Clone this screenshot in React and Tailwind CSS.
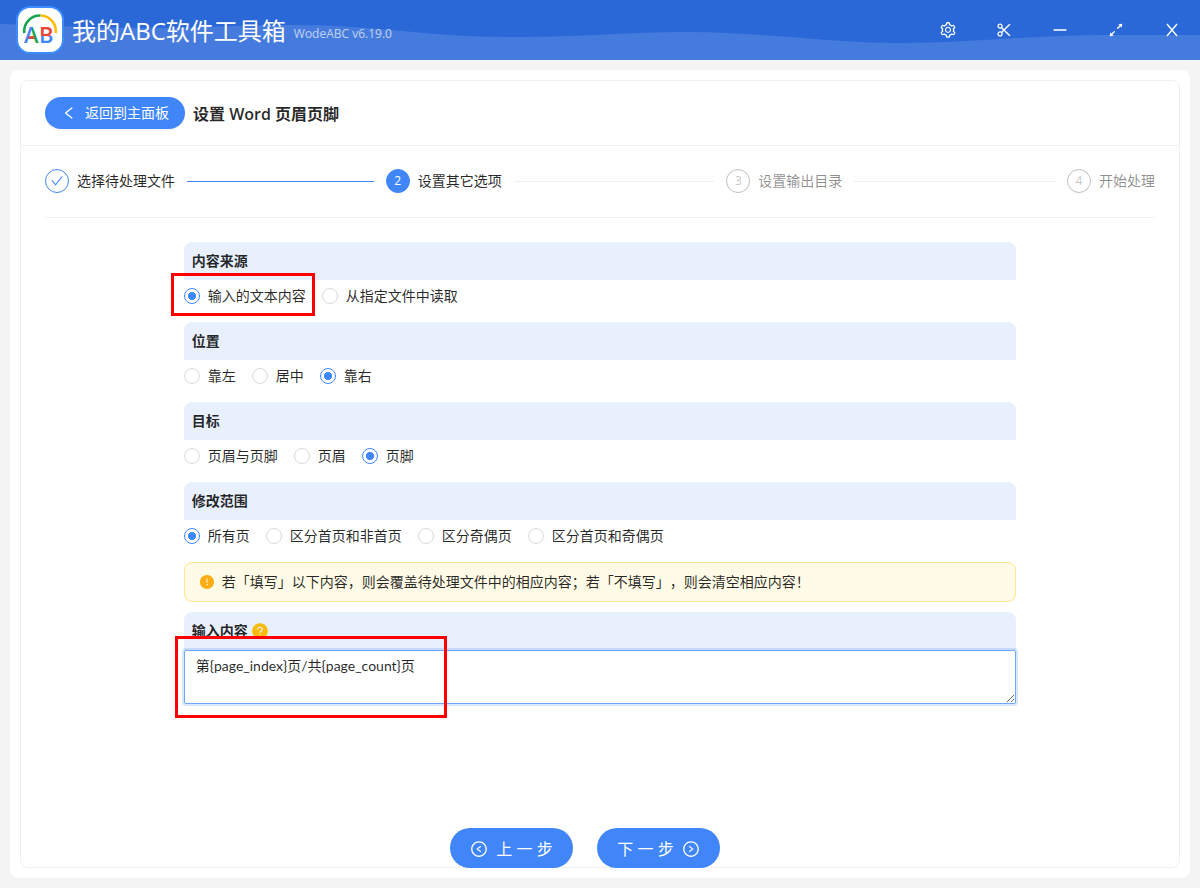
import { useState } from 'react'
import clsx from 'clsx'
import {
  AiFillExclamationCircle,
  AiFillQuestionCircle,
  AiOutlineArrowsAlt,
  AiOutlineCheck,
  AiOutlineLeft,
  AiOutlineLeftCircle,
  AiOutlineMinus,
  AiOutlineRightCircle,
  AiOutlineScissor,
  AiOutlineSetting,
} from 'react-icons/ai'

const STEPS = ['选择待处理文件', '设置其它选项', '设置输出目录', '开始处理']
const CURRENT = 1

const GROUPS = [
  { name: 'source', title: '内容来源', options: ['输入的文本内容', '从指定文件中读取'], initial: 0, marked: 0 },
  { name: 'align', title: '位置', options: ['靠左', '居中', '靠右'], initial: 2 },
  { name: 'target', title: '目标', options: ['页眉与页脚', '页眉', '页脚'], initial: 2 },
  { name: 'range', title: '修改范围', options: ['所有页', '区分首页和非首页', '区分奇偶页', '区分首页和奇偶页'], initial: 0 },
]

const WINDOW_BUTTONS = [
  { label: '设置', Icon: AiOutlineSetting },
  { label: '截图', Icon: AiOutlineScissor },
  { label: '最小化', Icon: AiOutlineMinus },
  { label: '最大化', Icon: AiOutlineArrowsAlt },
  { label: '关闭', Icon: CloseIcon },
]

function CloseIcon({ className }) {
  return (
    <svg viewBox="0 0 18 18" className={className} fill="none" stroke="currentColor" strokeWidth="1.4" aria-hidden="true">
      <path d="M4 3l10 12M14 3L4 15" />
    </svg>
  )
}

function Logo() {
  return (
    <svg viewBox="0 0 48 48" className="size-12 shrink-0" aria-hidden="true">
      <defs>
        <linearGradient id="logo-a" x1="0" x2="1" y1="0" y2="0">
          <stop offset="0.5" stopColor="#4285f4" />
          <stop offset="0.5" stopColor="#17a650" />
        </linearGradient>
        <linearGradient id="logo-b" x1="0" x2="0" y1="0" y2="1">
          <stop offset="0.56" stopColor="#ea4335" />
          <stop offset="0.56" stopColor="#4285f4" />
        </linearGradient>
      </defs>
      <rect x="1" y="1" width="46" height="46" rx="13" fill="#fff" stroke="#3c8cff" strokeWidth="2" />
      <path d="M8.300 27A15.700 15.700 0 0 1 24.500 9.500" fill="none" stroke="#17a650" strokeWidth="2.600" />
      <path d="M24.500 9.500A15.700 15.700 0 0 1 39.700 27" fill="none" stroke="#fbbc05" strokeWidth="2.600" />
      <text x="8" y="37" fontFamily="Open Sans" fontSize="22" fontWeight="600" fill="url(#logo-a)">A</text>
      <path d="M12.500 31.500h6" stroke="#ea4335" strokeWidth="2.600" />
      <text x="23" y="37" fontFamily="Open Sans" fontSize="22" fontWeight="600" fill="url(#logo-b)">B</text>
    </svg>
  )
}

function TitleBar() {
  return (
    <header className="relative h-[60px] bg-[#2968d6] text-white">
      <svg viewBox="0 0 1200 60" preserveAspectRatio="none" className="absolute inset-0 h-full w-full" aria-hidden="true">
        <path
          d="M0 24C50 25 90 28 140 28S240 25 300 25C370 25 430 37 510 37S620 32 690 32S830 43 900 43S1030 35 1110 35H1200V60H0Z"
          fill="#457bdd"
        />
      </svg>
      <div className="relative flex h-full items-center justify-between pl-4">
        <div className="flex items-center gap-2">
          <Logo />
          <span className="pt-0.5 text-2xl">我的ABC软件工具箱</span>
          <span className="pt-2 text-xs text-white/65">WodeABC v6.19.0</span>
        </div>
        <nav className="flex">
          {WINDOW_BUTTONS.map(({ label, Icon }) => (
            <button key={label} type="button" aria-label={label} className="flex h-[60px] w-14 items-center justify-center hover:bg-white/10">
              <Icon className="size-[18px]" />
            </button>
          ))}
        </nav>
      </div>
    </header>
  )
}

function Steps() {
  return (
    <ol className="flex border-b border-[#f0f0f0] pb-6">
      {STEPS.map((title, i) => {
        const done = i < CURRENT
        const active = i === CURRENT
        const last = i === STEPS.length - 1
        return (
          <li key={title} className={clsx('flex items-center', !last && 'flex-1 pr-3')}>
            <span
              className={clsx(
                'mr-2 flex size-6 shrink-0 items-center justify-center rounded-full border text-xs',
                done && 'border-[#4086f8] text-[#4086f8]',
                active && 'border-[#4086f8] bg-[#4086f8] text-white',
                !done && !active && 'border-black/25 text-black/25',
              )}
            >
              {done ? <AiOutlineCheck className="size-[14px]" /> : i + 1}
            </span>
            <span className={clsx('shrink-0', i > CURRENT ? 'text-black/45' : 'text-black/85')}>{title}</span>
            {!last && <span className={clsx('ml-3 h-px flex-1', done ? 'bg-[#4086f8]' : 'bg-[#f0f0f0]')} />}
          </li>
        )
      })}
    </ol>
  )
}

function SectionTitle({ children, ...props }) {
  return (
    <div className="flex h-[38px] items-center gap-[3px] rounded-t-lg bg-[#e8effd] px-2 font-semibold" {...props}>
      {children}
    </div>
  )
}

function RadioGroup({ name, title, options, initial, marked }) {
  const [value, setValue] = useState(initial)
  return (
    <section className="mb-[10px]" role="radiogroup" aria-labelledby={`${name}-title`}>
      <SectionTitle id={`${name}-title`}>{title}</SectionTitle>
      <div className="flex h-8 items-center gap-4">
        {options.map((option, i) => (
          <label key={option} className="relative flex cursor-pointer items-center gap-2">
            <input
              type="radio"
              name={name}
              checked={value === i}
              onChange={() => setValue(i)}
              className="size-4 appearance-none rounded-full border border-[#d9d9d9] bg-white checked:border-[#4086f8] checked:bg-[radial-gradient(circle,#4086f8_37%,transparent_45%)]"
            />
            {option}
            {marked === i && (
              <span className="pointer-events-none absolute -top-3 -right-[9px] -bottom-[9px] -left-[13px] border-3 border-[#ff0000]" />
            )}
          </label>
        ))}
      </div>
    </section>
  )
}

export default function App() {
  const [content, setContent] = useState('第{page_index}页/共{page_count}页')

  return (
    <div className="flex min-h-screen flex-col bg-[#f4f4f4] font-['Open_Sans','Noto_Sans_CJK_SC',sans-serif] text-sm/[22px] text-black/85">
      <TitleBar />

      <main className="m-[10px] flex flex-1 flex-col rounded-lg bg-white p-[10px]">
        <div className="flex flex-1 flex-col rounded-lg border border-[#f0f0f0]">
          <div className="flex h-[65px] items-center gap-2 border-b border-[#f0f0f0] px-6">
            <button
              type="button"
              className="flex h-8 items-center gap-2 rounded-full bg-[#4086f8] px-4 text-white shadow-[0_2px_0_rgba(0,0,0,0.04)]"
            >
              <AiOutlineLeft className="size-4" />
              返回到主面板
            </button>
            <h1 className="pt-0.5 text-base font-semibold">设置 Word 页眉页脚</h1>
          </div>

          <div className="px-6 pt-[23px]">
            <Steps />

            <div className="mx-auto w-3/4 pt-6">
              {GROUPS.map((group) => (
                <RadioGroup key={group.name} {...group} />
              ))}

              <div
                role="alert"
                className="mb-[10px] flex h-10 items-center gap-[7px] rounded-lg border border-[#ffe58f] bg-[#fffbe6] px-[14px] [text-spacing-trim:space-all]"
              >
                <AiFillExclamationCircle className="size-4 shrink-0 text-[#faad14]" />
                若「填写」以下内容，则会覆盖待处理文件中的相应内容；若「不填写」，则会清空相应内容！
              </div>

              <div className="relative">
                <SectionTitle>
                  <label htmlFor="content">输入内容</label>
                  <AiFillQuestionCircle className="size-[18px] text-[#f8bb06]" />
                </SectionTitle>
                <textarea
                  id="content"
                  rows={2}
                  value={content}
                  onChange={(e) => setContent(e.target.value)}
                  className="block w-full resize-y rounded-xs border border-[#69a8fc] bg-white px-[11px] py-1 font-['Lato','Noto_Sans_CJK_SC',sans-serif] shadow-[0_0_0_2px_rgba(64,134,248,0.2)] outline-none"
                />
                <span className="pointer-events-none absolute top-6 -left-[9px] h-[82px] w-[272px] border-3 border-[#ff0000]" />
              </div>
            </div>
          </div>

          <footer className="mt-auto -mb-px flex justify-center gap-6 pt-6 pr-[30px] text-base text-white">
            <button type="button" className="flex h-10 w-[123px] items-center justify-center gap-2 rounded-full bg-[#4086f8] pt-0.5">
              <AiOutlineLeftCircle className="size-[18px]" />
              上 一 步
            </button>
            <button type="button" className="flex h-10 w-[123px] items-center justify-center gap-2 rounded-full bg-[#4086f8] pt-0.5">
              下 一 步
              <AiOutlineRightCircle className="size-[18px]" />
            </button>
          </footer>
        </div>
      </main>
    </div>
  )
}
